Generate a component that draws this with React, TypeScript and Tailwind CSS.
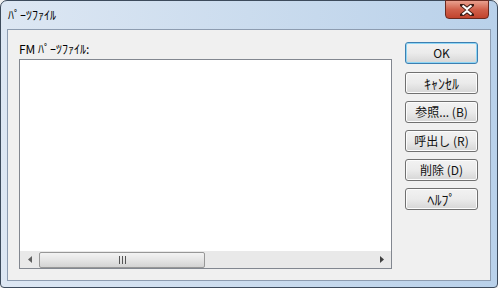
import React from "react";

const font = { fontFamily: '"Noto Sans CJK JP", "Noto Sans", sans-serif' };

function DialogButton({
  label,
  focused,
  big,
}: {
  label: React.ReactNode;
  focused?: boolean;
  big?: boolean;
}) {
  return (
    <button
      className={
        "w-[73px] h-[22px] rounded-[3px] border leading-none text-[#111] flex items-center justify-center bg-gradient-to-b from-[#f2f2f2] via-[#ebebeb] to-[#d6d6d6] " +
        (big ? "text-[14px] " : "text-[12px] ") +
        (focused
          ? "border-[#3c7fb1] shadow-[inset_0_0_0_1px_#8fd6f5]"
          : "border-[#707070] shadow-[inset_0_0_0_1px_#fcfcfc]")
      }
    >
      {label}
    </button>
  );
}

export default function App() {
  return (
    <div className="w-[498px] h-[288px] bg-[#f0f0f0] flex items-start" style={font}>
      <div className="w-[498px] h-[288px] rounded-t-[7px] rounded-b-[4px] border border-[#3d4b5c] bg-gradient-to-r from-[#dde7f3] via-[#cbdcee] to-[#b9d1ea] flex flex-col px-[6px] pb-[6px]">
        {/* Title bar */}
        <div className="h-[28px] flex items-start justify-between">
          <span className="text-[12px] text-black pl-[1px] pt-[6px] leading-[16px]">ﾊﾟｰﾂﾌｧｲﾙ</span>
          <button className="w-[44px] h-[19px] -mt-[1px] mr-[2px] rounded-b-[4px] border border-[#6a2a20] bg-gradient-to-b from-[#e8a08f] via-[#d0604b] to-[#c1432d] flex items-center justify-center">
            <svg width="14" height="12" viewBox="0 0 14 12">
              <path
                d="M2 1 L7 5 L12 1 M2 11 L7 7 L12 11"
                fill="none"
                stroke="#3b1a14"
                strokeWidth="4"
                strokeLinecap="square"
              />
              <path
                d="M2.5 1.5 L7 5 L11.5 1.5 M2.5 10.5 L7 7 L11.5 10.5"
                fill="none"
                stroke="#ffffff"
                strokeWidth="2.2"
              />
            </svg>
          </button>
        </div>

        {/* Client area */}
        <div className="flex-1 bg-[#f0f0f0] border border-[#8d9cb0] flex pl-[11px] pr-[11px] pt-[11px]">
          <div className="flex flex-col w-[373px]">
            <span className="text-[12px] text-black leading-[16px] h-[18px]">FM ﾊﾟｰﾂﾌｧｲﾙ:</span>
            <div className="w-[373px] h-[210px] border border-[#828790] bg-white flex flex-col justify-end">
              {/* horizontal scrollbar */}
              <div className="h-[17px] bg-[#e9e9e9] flex items-center">
                <div className="w-[19px] h-full flex items-center justify-center">
                  <svg width="4" height="7" viewBox="0 0 4 7">
                    <path d="M4 0 L0 3.5 L4 7 Z" fill="#606060" />
                  </svg>
                </div>
                <div className="w-[166px] h-[16px] rounded-[2px] border border-[#979797] bg-gradient-to-b from-[#f3f3f3] via-[#e5e5e5] to-[#d3d3d3] flex items-center justify-center">
                  <div className="flex gap-[2px]">
                    <div className="w-px h-[8px] bg-[#555]" />
                    <div className="w-px h-[8px] bg-[#555]" />
                    <div className="w-px h-[8px] bg-[#555]" />
                  </div>
                </div>
                <div className="flex-1" />
                <div className="w-[19px] h-full flex items-center justify-center">
                  <svg width="4" height="7" viewBox="0 0 4 7">
                    <path d="M0 0 L4 3.5 L0 7 Z" fill="#404040" />
                  </svg>
                </div>
              </div>
            </div>
          </div>

          {/* Buttons */}
          <div className="flex flex-col ml-[13px] pt-[1px]">
            <DialogButton label="OK" focused />
            <div className="flex flex-col gap-[7px] mt-[8px]">
              <DialogButton label="ｷｬﾝｾﾙ" big />
              <DialogButton label="参照... (B)" />
              <DialogButton label="呼出し (R)" />
              <DialogButton label="削除 (D)" />
              <DialogButton label="ﾍﾙﾌﾟ" big />
            </div>
          </div>
        </div>
      </div>
    </div>
  );
}
